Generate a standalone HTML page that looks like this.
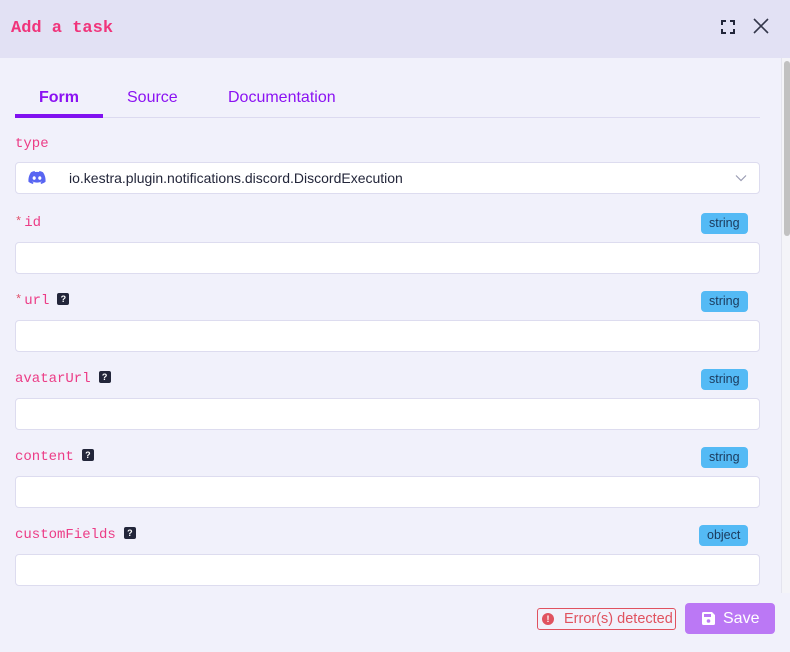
<!DOCTYPE html><html><head><style>
*{box-sizing:border-box;margin:0;padding:0}
body{width:790px;height:652px;background:#f1f1fb;position:relative;overflow:hidden;font-family:"Liberation Sans",sans-serif}
.hdr{position:absolute;left:0;top:0;width:790px;height:58px;background:#e2e1f4}
.title{position:absolute;left:11px;top:19px;font:bold 17px "Liberation Mono",monospace;color:#f0347b}
.tab{position:absolute;top:89px;font-size:16px;color:#8b12f2}
.line{position:absolute;left:15px;top:117px;width:745px;height:1px;background:#dcdaf0}
.lbl{position:absolute;left:15px;font:14px "Liberation Mono",monospace;color:#ec3c86}
.star{color:#e0526b;font-size:12px;vertical-align:top;margin-right:2px}
.q{display:inline-block;width:12px;height:12px;background:#23263a;color:#fff;font:bold 9px "Liberation Sans";text-align:center;line-height:12px;border-radius:2px;margin-left:8px;vertical-align:2px}
.inp{position:absolute;left:15px;width:745px;height:32px;background:#fff;border:1px solid #dddcef;border-radius:4px}
.badge{position:absolute;height:21px;background:#54baf5;color:#1b3a5c;font-size:12.5px;line-height:21px;padding:0 8px;border-radius:4px}
</style></head><body>
<div class="hdr"></div>
<div class="title">Add a task</div>
<svg style="position:absolute;left:721px;top:20px" width="14" height="14" viewBox="0 0 14 14" fill="none" stroke="#23263a" stroke-width="2"><path d="M1 5V1h4M9 1h4v4M13 9v4H9M5 13H1V9"/></svg>
<svg style="position:absolute;left:753px;top:18px" width="16" height="16" viewBox="0 0 16 16" stroke="#33364a" stroke-width="1.6"><path d="M1 1L15 15M15 1L1 15"/></svg>
<div style="position:absolute;left:781px;top:58px;width:9px;height:535px;background:#f4f4f8;border-left:1px solid #e4e4ee"></div>
<div style="position:absolute;left:784px;top:61px;width:6px;height:175px;background:#c1c1c1;border-radius:3px"></div>
<div class="tab" style="left:39px;font-weight:bold">Form</div>
<div class="tab" style="left:127px">Source</div>
<div class="tab" style="left:228px">Documentation</div>
<div class="line"></div>
<div style="position:absolute;left:15px;top:114px;width:88px;height:4px;background:#8111f0"></div>
<div class="lbl" style="top:136px">type</div>
<div class="inp" style="top:162px"></div>
<svg style="position:absolute;left:28px;top:171px" width="18" height="14" viewBox="0 0 18 14"><path fill="#5865f2" d="M15 1.2A14 14 0 0 0 11.5 0l-.5 1a13 13 0 0 0-4 0L6.5 0A14 14 0 0 0 3 1.2C.8 4.5.2 7.7.5 10.9A14 14 0 0 0 4.8 13l.9-1.4-1.4-.7.4-.3a10 10 0 0 0 8.6 0l.4.3-1.4.7.9 1.4a14 14 0 0 0 4.3-2.1c.4-3.7-.6-6.9-2.5-9.7zM6.2 8.9c-.9 0-1.6-.8-1.6-1.8s.7-1.8 1.6-1.8 1.6.8 1.6 1.8-.7 1.8-1.6 1.8zm5.6 0c-.9 0-1.6-.8-1.6-1.8s.7-1.8 1.6-1.8 1.6.8 1.6 1.8-.7 1.8-1.6 1.8z"/></svg>
<div style="position:absolute;left:69px;top:170px;font-size:14px;color:#23263a">io.kestra.plugin.notifications.discord.DiscordExecution</div>
<svg style="position:absolute;left:735px;top:174px" width="12" height="8" viewBox="0 0 12 8" fill="none" stroke="#9a9cb3" stroke-width="1.2"><path d="M1 1.5l5 5 5-5"/></svg>

<div class="lbl" style="top:215px"><span class="star">*</span>id</div>
<div class="badge" style="left:701px;top:213px">string</div>
<div class="inp" style="top:242px"></div>
<div class="lbl" style="top:293px"><span class="star">*</span>url<span class="q">?</span></div>
<div class="badge" style="left:701px;top:291px">string</div>
<div class="inp" style="top:320px"></div>
<div class="lbl" style="top:371px">avatarUrl<span class="q">?</span></div>
<div class="badge" style="left:701px;top:369px">string</div>
<div class="inp" style="top:398px"></div>
<div class="lbl" style="top:449px">content<span class="q">?</span></div>
<div class="badge" style="left:701px;top:447px">string</div>
<div class="inp" style="top:476px"></div>
<div class="lbl" style="top:527px">customFields<span class="q">?</span></div>
<div class="badge" style="left:699px;top:525px">object</div>
<div class="inp" style="top:554px"></div>

<div style="position:absolute;left:537px;top:608px;width:139px;height:22px;border:1px solid #e0525f;border-radius:3px;color:#e0525f;font-size:14.5px;line-height:20px;padding-left:26px">Error(s) detected</div>
<div style="position:absolute;left:542px;top:613px;width:12px;height:12px;border-radius:50%;background:#e0525f;color:#fff;font:bold 9px 'Liberation Sans';text-align:center;line-height:12px">!</div>
<div style="position:absolute;left:685px;top:603px;width:90px;height:31px;background:#bb78f5;border-radius:4px;color:#fff;font-size:16px;line-height:31px;padding-left:38px">Save</div>
<svg style="position:absolute;left:702px;top:612px" width="13" height="13" viewBox="0 0 13 13"><path fill="#fff" d="M0 1.5A1.5 1.5 0 0 1 1.5 0H10l3 3v8.5A1.5 1.5 0 0 1 11.5 13h-10A1.5 1.5 0 0 1 0 11.5z"/><rect x="2" y="2" width="7" height="3" fill="#bb78f5"/><circle cx="6.5" cy="9" r="1.8" fill="#bb78f5"/></svg>
</body></html>
